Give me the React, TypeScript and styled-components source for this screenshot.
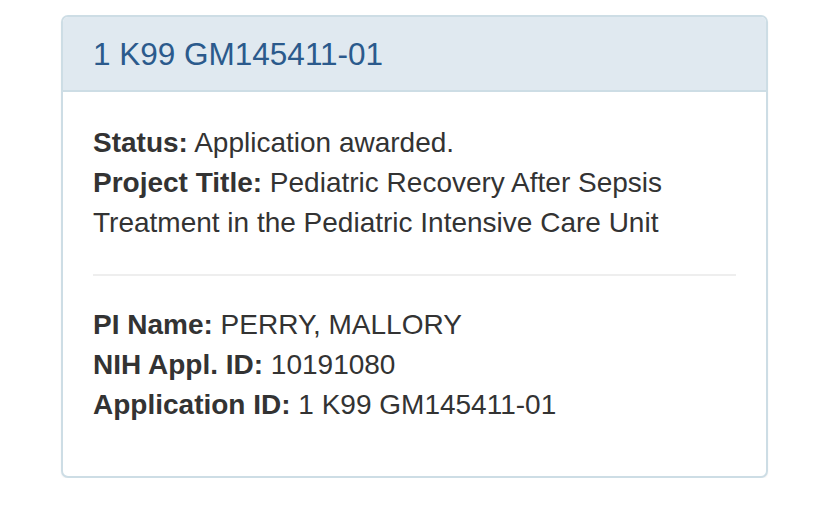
import React from "react";
import styled, { createGlobalStyle } from "styled-components";

const Global = createGlobalStyle`
  html, body { margin: 0; padding: 0; background: #fff; }
  body { font-family: "Liberation Sans", Arial, sans-serif; color: #333; }
`;

const Page = styled.div`
  padding: 15px 0 0 61px;
`;

const Panel = styled.div`
  width: 707px;
  box-sizing: border-box;
  border: 2px solid #cddde5;
  border-radius: 7px;
  background: #fff;
  box-shadow: 0 1px 2px rgba(0, 0, 0, 0.05);
  overflow: hidden;
`;

const Heading = styled.div`
  background: #e0e9f0;
  border-bottom: 2px solid #cddde5;
  padding: 20px 30px 19px;
`;

const Title = styled.h3`
  margin: 0;
  font-size: 31.5px;
  font-weight: 400;
  line-height: 34px;
  color: #2b5a8c;
`;

const Body = styled.div`
  padding: 31px 30px 51px;
`;

const Para = styled.p`
  margin: 0;
  font-size: 28px;
  line-height: 40px;
`;

const Divider = styled.hr`
  margin: 31px 0 29px;
  border: 0;
  border-top: 2px solid #eeeeee;
`;

const Label = styled.b`
  font-weight: 700;
`;

export default function App() {
  return (
    <>
      <Global />
      <Page>
        <Panel>
          <Heading>
            <Title>1 K99 GM145411-01</Title>
          </Heading>
          <Body>
            <Para>
              <Label>Status:</Label> Application awarded.
              <br />
              <Label>Project Title:</Label> Pediatric Recovery After Sepsis
              Treatment in the Pediatric Intensive Care Unit
            </Para>
            <Divider />
            <Para>
              <Label>PI Name:</Label> PERRY, MALLORY
              <br />
              <Label>NIH Appl. ID:</Label> 10191080
              <br />
              <Label>Application ID:</Label> 1 K99 GM145411-01
            </Para>
          </Body>
        </Panel>
      </Page>
    </>
  );
}
